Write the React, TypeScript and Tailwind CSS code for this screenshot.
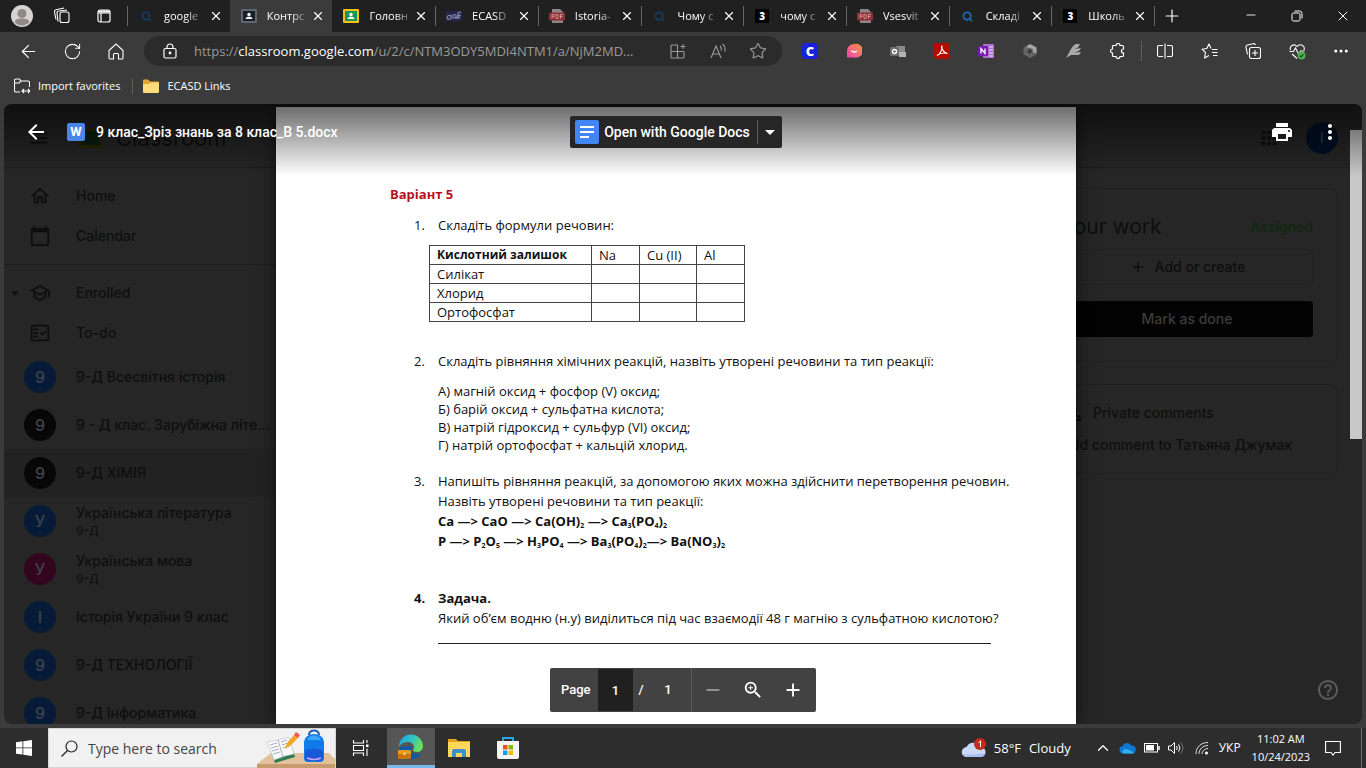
import type { ReactNode } from "react";
import {
  ArrowLeft, RotateCw, Star, Plus, Minus, X, Ellipsis, ChevronUp, Search,
} from "lucide-react";
import {
  MdArrowBack, MdPrint, MdMoreVert, MdHelpOutline, MdOutlineHome, MdCalendarToday, MdOutlineSchool,
  MdOutlineFactCheck, MdArrowDropDown, MdZoomIn, MdAdd, MdRemove, MdMenu, MdPersonOutline, MdApps,
} from "react-icons/md";

const ui = "font-['Open_Sans','Noto_Sans',sans-serif]";
const google = "font-['Inter','Noto_Sans',sans-serif]";
const preview = "font-['Roboto','Noto_Sans',sans-serif]";

function ClassroomIcon({ frame, board }: { frame: string; board: string }) {
  return (
    <svg width="16" height="16" viewBox="0 0 16 16">
      <rect x="0" y="1" width="16" height="14" rx="1" fill={frame} />
      <rect x="2" y="3" width="12" height="10" fill={board} />
      <circle cx="8" cy="6.5" r="1.7" fill="#fff" />
      <path d="M4.5 11c0-1.800 2-2.300 3.500-2.300s3.500.5 3.500 2.300z" fill="#fff" />
    </svg>
  );
}

function PdfIcon() {
  return (
    <svg width="16" height="16" viewBox="0 0 16 16">
      <path d="M3 1h8l3 3v11H3z" fill="#8b8583" />
      <rect x="0" y="4.500" width="16" height="8" rx="1" fill="#8f3237" />
      <path d="M3 10.500v-4h1.500a1 1 0 0 1 0 2.200H3M7 6.500v4h.8a2 2 0 0 0 0-4zM11.500 10.500v-4H14M11.500 8.500h2" stroke="#d9a9aa" strokeWidth=".8" fill="none" />
    </svg>
  );
}

function ZIcon() {
  return <span className="flex h-3.5 w-3.5 items-center justify-center bg-black text-[10px] leading-none font-extrabold text-white">3</span>;
}

function EcasdIcon() {
  return (
    <svg width="16" height="16" viewBox="0 0 16 16">
      <rect y="3" width="16" height="10" fill="#24264a" />
      <path d="M5 8.500c-1-2-4-1-4 1s3 2.500 4 .5V7v4M7 11V7c2-1 3 0 3 1v3M12 11V5c0-1 2-1 3-.5M11 7.500h4M8 9.500h6" stroke="#7e80a0" strokeWidth="1.300" fill="none" />
    </svg>
  );
}

function Magnifier({ color }: { color: string }) {
  return <Search size={11} color={color} strokeWidth={4} />;
}

const tabs: { title: string; icon: ReactNode; active?: boolean }[] = [
  { title: "google", icon: <Magnifier color="#183a5c" /> },
  { title: "Контрс", icon: <ClassroomIcon frame="#5f6670" board="#15202d" />, active: true },
  { title: "Головн", icon: <ClassroomIcon frame="#f2c20c" board="#23915a" /> },
  { title: "ECASD", icon: <EcasdIcon /> },
  { title: "Istoria-", icon: <PdfIcon /> },
  { title: "Чому с", icon: <Magnifier color="#183a5c" /> },
  { title: "чому с", icon: <ZIcon /> },
  { title: "Vsesvit", icon: <PdfIcon /> },
  { title: "Складі", icon: <Magnifier color="#2069b0" /> },
  { title: "Школь", icon: <ZIcon /> },
];

function TabBar() {
  return (
    <div className="flex h-8 shrink-0 items-stretch bg-[#202020] text-white">
      <div className="flex w-[127px] items-center">
        <button aria-label="Profile" className="ml-[11px]">
          <svg width="22" height="22" viewBox="0 0 22 22">
            <circle cx="11" cy="11" r="11" fill="#d6d3d1" />
            <circle cx="11" cy="8.500" r="4.500" fill="#8f8a87" />
            <path d="M3.500 17c1-3 4-3.500 7.500-3.500s6.500.5 7.500 3.500a10 10 0 0 1-15 0z" fill="#8f8a87" />
          </svg>
        </button>
        <button aria-label="Workspaces" className="ml-5">
          <svg width="18" height="18" viewBox="0 0 18 18" fill="none" stroke="#fff" strokeWidth="1.1">
            <rect x="7" y="5" width="9" height="10.500" rx="2" />
            <path d="M5 14.500 4 6a2 2 0 0 1 2-2l8-1M3 12.500 1.500 5a2 2 0 0 1 1.500-2.300L11 1" />
          </svg>
        </button>
        <button aria-label="Tab actions" className="ml-[26px]">
          <svg width="14" height="14" viewBox="0 0 14 14" fill="none" stroke="#fff" strokeWidth="1.2">
            <rect x="1" y="1" width="12" height="12" rx="2" />
            <path d="M1 4h12M4 4v9" />
            <path d="M1.500 2.500h11" strokeWidth="2" />
          </svg>
        </button>
      </div>
      <div className="flex min-w-0 flex-1">
        {tabs.map((t, i) => (
          <div
            key={i}
            className={
              t.active
                ? "flex min-w-0 flex-1 basis-0 items-center gap-[10px] bg-[#3b3b3b] pr-[6px] pl-[11px]"
                : "flex min-w-0 flex-1 basis-0 items-center gap-[10px] pr-[6px] pl-[11px] " +
                  (i === 1 || i === 2 ? "" : "bg-[linear-gradient(#666,#666)] bg-[length:1px_20px] bg-[position:left_center] bg-no-repeat")
            }
          >
            <span className="flex w-4 shrink-0 justify-center">{t.icon}</span>
            <span className="min-w-0 flex-1 text-[11px] leading-4 whitespace-nowrap">
              <span className="inline-block [mask-image:linear-gradient(to_right,#000_65%,#0005)]">{t.title}</span>
            </span>
            <button aria-label="Close tab" className="flex w-4 shrink-0 justify-center">
              <X size={14} strokeWidth={2} />
            </button>
          </div>
        ))}
      </div>
      <div className="flex w-[212px] items-center">
        <span className="h-5 w-px bg-[#666]" />
        <button aria-label="New tab" className="ml-[7px]"><Plus size={20} strokeWidth={1.4} /></button>
        <div className="ml-auto flex">
          <button aria-label="Minimize" className="flex w-[46px] justify-center"><Minus size={14} strokeWidth={1.5} /></button>
          <button aria-label="Restore" className="flex w-[46px] items-center justify-center">
            <svg width="12" height="12" viewBox="0 0 12 12" fill="none" stroke="#fff">
              <rect x="1" y="3" width="8" height="8" rx="1.500" />
              <path d="M3.500 1h5a2.500 2.500 0 0 1 2.500 2.500v5" />
            </svg>
          </button>
          <button aria-label="Close" className="flex w-[46px] justify-center"><X size={16} strokeWidth={1.5} /></button>
        </div>
      </div>
    </div>
  );
}

function ToolButton({ label, children }: { label: string; children: ReactNode }) {
  return (
    <button aria-label={label} className="flex h-8 w-11 shrink-0 items-center justify-center">
      {children}
    </button>
  );
}

function Toolbar() {
  return (
    <div className="flex h-[38px] shrink-0 items-center bg-[#3b3b3b] pr-[3px] pl-[6px] text-white">
      <ToolButton label="Back"><ArrowLeft size={21} strokeWidth={1.3} /></ToolButton>
      <ToolButton label="Refresh"><RotateCw size={19} strokeWidth={1.3} /></ToolButton>
      <ToolButton label="Home">
        <svg width="16" height="17" viewBox="0 0 16 17" fill="none" stroke="#fff" strokeWidth="1.1">
          <path d="M1 7.500 8 1l7 6.500V15a1 1 0 0 1-1 1h-3.500v-4.500a1 1 0 0 0-1-1h-3a1 1 0 0 0-1 1V16H2a1 1 0 0 1-1-1z" />
        </svg>
      </ToolButton>
      <div className="mx-[6px] flex h-[30px] min-w-0 flex-1 items-center rounded-full bg-[#2b2b2b] pr-1 text-[#9a9a9a]">
        <svg className="ml-[19px] shrink-0" width="14" height="16" viewBox="0 0 14 16" fill="none" stroke="#fff" strokeWidth="1.2">
          <rect x="1" y="5.500" width="12" height="9.500" rx="1.500" />
          <path d="M4 5.500V4a3 3 0 0 1 6 0v1.500" />
          <circle cx="7" cy="10" r=".8" fill="#fff" />
        </svg>
        <div className="ml-[17px] min-w-0 flex-1 overflow-hidden text-[13px] leading-5 whitespace-nowrap">
          https://<span className="text-white">classroom.google.com</span>/u/2/c/NTM3ODY5MDI4NTM1/a/NjM2MD...
        </div>
        <button aria-label="Install app" className="flex w-10 shrink-0 justify-center">
          <svg width="16" height="16" viewBox="0 0 16 16" fill="none" stroke="currentColor" strokeWidth="1.1">
            <path d="M7.500 2H2a1 1 0 0 0-1 1v11a1 1 0 0 0 1 1h11a1 1 0 0 0 1-1V8.500M1 8.500h13M7.500 2v13M10.500 3.500h5M13 1v5" />
          </svg>
        </button>
        <button aria-label="Read aloud" className="flex w-10 shrink-0 justify-center">
          <svg width="16" height="16" viewBox="0 0 16 16" fill="none" stroke="currentColor" strokeWidth="1.1">
            <path d="M1 15 6 3l5 12M3 11h6M10 3c1.500 1.500 1.500 3 1 4.500M12.500 1c2.500 2 3 5 2 7.500" />
          </svg>
        </button>
        <button aria-label="Favorite" className="flex w-10 shrink-0 justify-center"><Star size={18} strokeWidth={1.5} /></button>
      </div>
      <ToolButton label="Clever">
        <span className="flex h-4 w-4 items-center justify-center rounded-sm bg-[#1a1fe0] text-[13px] leading-none font-extrabold">C</span>
      </ToolButton>
      <ToolButton label="Screencast">
        <svg width="16" height="16" viewBox="0 0 16 16">
          <defs><linearGradient id="sc" x1="1" y1="0" x2="0" y2="1"><stop offset="0" stopColor="#ff9a3d" /><stop offset="1" stopColor="#f03fb5" /></linearGradient></defs>
          <path d="M8 1a7 7 0 1 1 0 13.500H1V8a7 7 0 0 1 7-7z" fill="url(#sc)" />
          <path d="M5 7c2 1.500 4 1.500 6.500.2a3.300 3.300 0 0 1-6.500-.2z" fill="#fff" />
        </svg>
      </ToolButton>
      <ToolButton label="Password manager">
        <svg width="16" height="16" viewBox="0 0 16 16">
          <path d="M6 3h9v9H8z" fill="#8b8b8b" />
          <rect x="9" y="9" width="7" height="5" fill="#b3b3b3" />
          <rect y="4" width="9" height="9" rx="1" fill="#6c6c6c" />
          <circle cx="4.500" cy="8.500" r="2" fill="none" stroke="#fff" strokeWidth="1.4" />
        </svg>
      </ToolButton>
      <ToolButton label="Acrobat">
        <svg width="16" height="16" viewBox="0 0 16 16">
          <rect width="16" height="16" rx="2" fill="#b30b00" />
          <path d="M3 12.500c3-1.500 5.500-5.500 5-9.500-1.500 0 1 7 5.500 7.500C10 9.500 6 10 3 12.500z" fill="none" stroke="#fff" strokeWidth="1.1" />
        </svg>
      </ToolButton>
      <ToolButton label="OneNote">
        <svg width="16" height="16" viewBox="0 0 16 16">
          <rect x="5" y="1" width="11" height="14" rx="1" fill="#b06fd0" />
          <path d="M11 4h4M11 7h4M11 10h4M11 13h4" stroke="#f0dcf8" />
          <rect y="3" width="10" height="10" rx="1" fill="#7719aa" />
          <path d="M3 10.500v-5l4 5v-5" stroke="#fff" strokeWidth="1.3" fill="none" />
        </svg>
      </ToolButton>
      <ToolButton label="Extension">
        <svg width="16" height="16" viewBox="0 0 16 16">
          <path d="m8 1 6.500 3.500v7L8 15l-6.500-3.500v-7z" fill="#666" />
          <path d="m8 1 6.500 3.500v6L11 9V6L4 4z" fill="#a5a5a5" />
          <path d="M6 6.500 9 6l1 3-2 2-2.500-1.500z" fill="#3b3b3b" />
        </svg>
      </ToolButton>
      <ToolButton label="Editor">
        <svg width="16" height="16" viewBox="0 0 16 16" fill="#aaa">
          <path d="M0 15 5 6q2-4 5-5h4l-2 3.500L8.500 6 15 5l-2 3-5 1.500 7-.5-2 3H5z" />
        </svg>
      </ToolButton>
      <ToolButton label="Extensions">
        <svg width="16" height="16" viewBox="0 0 16 16" fill="none" stroke="#fff" strokeWidth="1.2">
          <path d="M3.500 2.500H6a2 2 0 0 1 4 0h2.500a1 1 0 0 1 1 1V6a2 2 0 0 0 0 4v2.500a1 1 0 0 1-1 1H10a2 2 0 0 1-4 0H3.500a1 1 0 0 1-1-1V10a2 2 0 0 1 0-4V3.500a1 1 0 0 1 1-1z" />
        </svg>
      </ToolButton>
      <span className="mx-px h-5 w-px shrink-0 bg-[#5e5e5e]" />
      <ToolButton label="Split screen">
        <svg width="16" height="16" viewBox="0 0 16 16" fill="none" stroke="#fff" strokeWidth="1.1">
          <path d="M6 2.500H2a1.500 1.500 0 0 0-1.500 1.500v8A1.500 1.500 0 0 0 2 13.500h4M10 2.500h4a1.500 1.500 0 0 1 1.500 1.500v8a1.500 1.500 0 0 1-1.500 1.500h-4M8 .5v15" />
        </svg>
      </ToolButton>
      <ToolButton label="Favorites">
        <svg width="17" height="16" viewBox="0 0 17 16" fill="none" stroke="#fff" strokeWidth="1.1" strokeLinejoin="round">
          <path d="M10 5.500 8 1 5.800 5.500 1 6.200l3.500 3.300L3.600 15 8 12.500M11 6.500h5.500M11 9.500h5.500M12 12.500h4.500" />
        </svg>
      </ToolButton>
      <ToolButton label="Collections">
        <svg width="16" height="16" viewBox="0 0 16 16" fill="none" stroke="#fff" strokeWidth="1.1">
          <rect x="4.500" y="4.500" width="11" height="11" rx="2" />
          <path d="M10 7v6M7 10h6M2.500 11.500 1 4.500A2 2 0 0 1 2.500 2L8 .8A2 2 0 0 1 10.500 2" />
        </svg>
      </ToolButton>
      <ToolButton label="Browser essentials">
        <svg width="17" height="17" viewBox="0 0 17 17" fill="none" stroke="#fff" strokeWidth="1.1">
          <path d="M1.500 7C0 3 5 0 8 3.500 11 0 16.500 2.500 15 7M.5 8.500h4L6.500 5l3 6 2-3h4M3 11l5 4.500" />
          <circle cx="12.500" cy="12.500" r="4" fill="#4caf50" stroke="none" />
          <path d="m10.800 12.700 1.200 1.200 2.300-2.600" stroke="#1c3a1d" />
        </svg>
      </ToolButton>
      <ToolButton label="Menu"><Ellipsis size={18} /></ToolButton>
    </div>
  );
}

function FavoritesBar() {
  return (
    <div className="flex h-[34px] shrink-0 items-center bg-[#3b3b3b] pb-0.5 pl-[14px] text-[11px] leading-4 text-white">
      <button className="flex items-center gap-2">
        <svg width="16" height="16" viewBox="0 0 16 16" fill="none" stroke="#fff" strokeWidth="1.1">
          <path d="M6 14H2a1.500 1.500 0 0 1-1.500-1.500v-10A1.500 1.500 0 0 1 2 1h3.500L7 3h7a1.500 1.500 0 0 1 1.500 1.500V9M.5 5H5l2-2M8 13h8M10 11l-2 2 2 2M14 11l2 2-2 2" />
        </svg>
        Import favorites
      </button>
      <span className="mr-[10px] ml-3 h-4 w-px bg-[#5e5e5e]" />
      <button className="flex items-center gap-2">
        <svg width="16" height="14" viewBox="0 0 16 14">
          <path d="M0 1.500A1 1 0 0 1 1 .5h4l2 2h8a1 1 0 0 1 1 1V13H0z" fill="#e0a92e" />
          <path d="M0 5h6l1.500-1.500H16V13a1 1 0 0 1-1 1H1a1 1 0 0 1-1-1z" fill="#ffdc7c" />
        </svg>
        ECASD Links
      </button>
    </div>
  );
}

const courses = [
  { letter: "9", name: "9-Д Всесвітня історія", color: "bg-[#061b38]" },
  { letter: "9", name: "9 - Д клас. Зарубіжна літе...", color: "bg-[#070707]" },
  { letter: "9", name: "9-Д ХІМІЯ", color: "bg-[#070707]", selected: true },
  { letter: "У", name: "Українська література", section: "9-Д", color: "bg-[#061b38]" },
  { letter: "У", name: "Українська мова", section: "9-Д", color: "bg-[#34051f]" },
  { letter: "І", name: "Історія України 9 клас", color: "bg-[#061b38]" },
  { letter: "9", name: "9-Д ТЕХНОЛОГІЇ", color: "bg-[#061b38]" },
  { letter: "9", name: "9-Д Інформатика", color: "bg-[#061b38]" },
];

function NavRow({ icon, label, caret }: { icon: ReactNode; label: string; caret?: boolean }) {
  return (
    <a href="#" className="flex h-10 items-center">
      <span className="flex w-5 justify-end text-[18px]">{caret && <MdArrowDropDown className="shrink-0" />}</span>
      <span className="flex w-8 justify-center text-[22px]">{icon}</span>
      <span className="ml-5">{label}</span>
    </a>
  );
}

// The classroom page that sits dimmed behind the document preview
function Classroom() {
  return (
    <div className={`absolute inset-0 flex flex-col overflow-hidden bg-[#262626] text-[14px] leading-5 font-medium text-[#0e0e0e] ${google}`}>
      <header className="flex h-16 shrink-0 items-center border-b border-[#1f1f1f] pt-1 text-[22px] font-normal">
        <MdMenu className="ml-6 shrink-0" />
        <span className="ml-7 flex h-5 w-6 shrink-0 items-center justify-center bg-[#2b2500]">
          <span className="h-3.5 w-[18px] bg-[#08200f]" />
        </span>
        <span className="ml-[14px] shrink-0">Classroom</span>
        <MdApps className="ml-auto shrink-0" />
        <span className="mr-6 ml-[26px] flex h-8 w-8 shrink-0 items-center justify-center rounded-full bg-[#001026] text-[14px] text-[#3a4452]">І</span>
      </header>
      <div className="flex min-h-0 flex-1">
        <nav className="w-[272px] shrink-0 pt-2">
          <NavRow icon={<MdOutlineHome />} label="Home" />
          <NavRow icon={<MdCalendarToday />} label="Calendar" />
          <div className="my-2 border-t border-[#1f1f1f]" />
          <NavRow icon={<MdOutlineSchool />} label="Enrolled" caret />
          <NavRow icon={<MdOutlineFactCheck />} label="To-do" />
          {courses.map((c) => (
            <a key={c.name} href="#" className={c.selected ? "flex h-12 items-center bg-[#222] pl-5" : "flex h-12 items-center pl-5"}>
              <span className={`flex h-8 w-8 shrink-0 items-center justify-center rounded-full text-[16px] text-[#3f434a] ${c.color}`}>{c.letter}</span>
              <span className="ml-5 flex min-w-0 flex-col whitespace-nowrap">
                <span>{c.name}</span>
                {c.section && <span className="text-[12px] leading-4 font-normal">{c.section}</span>}
              </span>
            </a>
          ))}
        </nav>
        <aside className="mr-6 ml-auto w-[302px] shrink-0 pt-5">
          <section className="rounded-lg border border-[#202020] p-6">
            <div className="flex h-7 items-center justify-between">
              <h2 className="text-[21px] font-normal">Your work</h2>
              <span className="text-[#10260f]">Assigned</span>
            </div>
            <button className="mt-2 flex h-9 w-full items-center justify-center gap-2 rounded border border-[#212121]">
              <MdAdd className="text-[18px]" />
              Add or create
            </button>
            <button className="mt-4 h-9 w-full rounded bg-[#030303] text-[#3c3c3c]">Mark as done</button>
          </section>
          <section className="mt-[22px] rounded-lg border border-[#202020] px-6 pt-4 pb-4">
            <div className="flex h-6 items-center gap-2">
              <MdPersonOutline className="text-[24px]" />
              Private comments
            </div>
            <p className="mt-2 h-6 leading-6 whitespace-nowrap">Add comment to Татьяна Джумак</p>
          </section>
        </aside>
      </div>
    </div>
  );
}

function Sub({ children }: { children: ReactNode }) {
  return <sub className="bottom-[-2px] text-[7px]">{children}</sub>;
}

const residues = ["Силікат", "Хлорид", "Ортофосфат"];

function DocumentPage() {
  return (
    <article className="mx-auto mt-[3px] w-[800px] shrink-0 bg-white pt-[77px] pl-[114px] text-[13px] leading-5 text-[#111] shadow-[0_0_16px_#000a] font-['Open_Sans','Noto_Sans',sans-serif]">
      <h1 className="font-bold text-[#b5121b]">Варіант 5</h1>
      <div className="mt-[11px] flex whitespace-nowrap">
        <span className="ml-6 w-6 shrink-0">1.</span>
        <p>Складіть формули речовин:</p>
      </div>
      <table className="mt-[10px] ml-[39px] table-fixed border-collapse text-left leading-[18px]">
        <thead>
          <tr>
            <th className="w-[162px] border border-[#444] px-[7px] py-0 text-[12px] whitespace-nowrap">Кислотний залишок</th>
            <th className="w-12 border border-[#444] px-[7px] py-0 font-normal">Na</th>
            <th className="w-[57px] border border-[#444] px-[7px] py-0 font-normal whitespace-nowrap">Cu (II)</th>
            <th className="w-12 border border-[#444] px-[7px] py-0 font-normal">Al</th>
          </tr>
        </thead>
        <tbody>
          {residues.map((r) => (
            <tr key={r}>
              <td className="border border-[#444] px-[7px] py-0">{r}</td>
              <td className="border border-[#444]" />
              <td className="border border-[#444]" />
              <td className="border border-[#444]" />
            </tr>
          ))}
        </tbody>
      </table>
      <div className="mt-[29px] flex whitespace-nowrap">
        <span className="ml-6 w-6 shrink-0">2.</span>
        <p>Складіть рівняння хімічних реакцій, назвіть утворені речовини та тип реакції:</p>
      </div>
      <div className="mt-[11px] ml-12 leading-[18px] whitespace-nowrap">
        <p>А) магній оксид + фосфор (V) оксид;</p>
        <p>Б) барій оксид + сульфатна кислота;</p>
        <p>В) натрій гідроксид + сульфур (VI) оксид;</p>
        <p>Г) натрій ортофосфат + кальцій хлорид.</p>
      </div>
      <div className="mt-[17px] flex whitespace-nowrap">
        <span className="ml-6 w-6 shrink-0">3.</span>
        <div>
          <p>Напишіть рівняння реакцій, за допомогою яких можна здійснити перетворення речовин.</p>
          <p>Назвіть утворені речовини та тип реакції:</p>
          <p className="font-bold">
            Ca —&gt; CaO —&gt; Ca(OH)<Sub>2</Sub> —&gt; Ca<Sub>3</Sub>(PO<Sub>4</Sub>)<Sub>2</Sub>
          </p>
          <p className="font-bold">
            P —&gt; P<Sub>2</Sub>O<Sub>5</Sub> —&gt; H<Sub>3</Sub>PO<Sub>4</Sub> —&gt; Ba<Sub>3</Sub>(PO<Sub>4</Sub>)<Sub>2</Sub>—&gt; Ba(NO<Sub>3</Sub>)<Sub>2</Sub>
          </p>
        </div>
      </div>
      <div className="mt-[37px] flex whitespace-nowrap">
        <span className="ml-6 w-6 shrink-0 font-bold">4.</span>
        <div>
          <p className="font-bold">Задача.</p>
          <p>Який об’єм водню (н.у) виділиться під час взаємодії 48 г магнію з сульфатною кислотою?</p>
          <div className="mt-[15px] w-[553px] border-t border-[#222]" />
        </div>
      </div>
    </article>
  );
}

function PreviewHeader() {
  return (
    <div className={`absolute inset-x-0 top-0 grid h-[72px] grid-cols-[1fr_auto_1fr] items-start bg-gradient-to-b from-black/60 to-transparent pt-3 pr-[14px] text-[14px] leading-5 font-medium text-white ${preview}`}>
      <div className="flex h-8 items-center">
        <button aria-label="Close preview" className="ml-5 text-[24px]"><MdArrowBack /></button>
        <span className="ml-[19px] flex h-[18px] w-[18px] shrink-0 items-center justify-center rounded-xs bg-[#4a86e8] text-[13px] font-bold">W</span>
        <span className="ml-[11px] whitespace-nowrap">9 клас_Зріз знань за 8 клас_В 5.docx</span>
      </div>
      <div className="flex h-8 items-center rounded-xs bg-[#262626]">
        <button className="flex items-center gap-[5px] pr-[7px] pl-[5px] whitespace-nowrap">
          <svg width="24" height="24" viewBox="0 0 24 24">
            <rect width="24" height="24" rx="2" fill="#4285f4" />
            <path d="M5 7h14M5 12h14M5 17h9" stroke="#fff" strokeWidth="2.200" />
          </svg>
          Open with Google Docs
        </button>
        <span className="h-6 w-px bg-[#5c5c5c]" />
        <button aria-label="Choose app" className="flex w-6 justify-center text-[24px]"><MdArrowDropDown className="shrink-0" /></button>
      </div>
      <div className="flex h-8 items-center justify-end text-[24px]">
        <button aria-label="Print" className="mr-6"><MdPrint /></button>
        <button aria-label="More actions" className="mr-[6px]"><MdMoreVert /></button>
      </div>
    </div>
  );
}

function PageControls() {
  return (
    <div className={`absolute inset-x-0 bottom-3 flex justify-center text-[13px] font-medium text-white ${preview}`}>
      <div className="flex h-11 items-center rounded-xs bg-[#424242] pr-[3px] pl-[11px]">
        <label htmlFor="page" className="w-[37px]">Page</label>
        <input id="page" defaultValue="1" className="h-[42px] w-[35px] bg-[#202020] text-center" />
        <span className="w-4 text-center">/</span>
        <span className="w-[42px] pr-1 text-center">1</span>
        <span className="mr-px h-full w-px bg-[#5c5c5c]" />
        <button aria-label="Zoom out" className="flex w-10 justify-center text-[22px] text-[#999]"><MdRemove /></button>
        <button aria-label="Reset zoom" className="flex w-10 justify-center text-[22px]"><MdZoomIn /></button>
        <button aria-label="Zoom in" className="flex w-10 justify-center text-[22px]"><MdAdd /></button>
      </div>
    </div>
  );
}

function SearchArt() {
  return (
    <svg className="h-10 w-20 shrink-0" viewBox="0 0 80 40">
      <path d="m2 36 14-11h58l6 6v9H2z" fill="#e2c19c" />
      <path d="M2 36h78v4H2z" fill="#c69b6d" />
      <path d="m13 15 21-5 6 19-20 6z" fill="#2f7d51" />
      <path d="m12 14 11-2 11-3 5 17-9 2-11 4z" fill="#fafafa" stroke="#b9bfd0" strokeWidth=".6" />
      <path d="m15 17 7-2M16 20l7-2M17 23l7-2M18 26l7-2M26 14l6-2M27 17l6-2M28 20l6-2M23 12l5 17" stroke="#9298b5" strokeWidth=".8" />
      <path d="m30 21 2-6 7-8 4 3-8 8z" fill="#f5a623" />
      <path d="m39 7 2-3 4 3-2 3z" fill="#ef5350" />
      <path d="M54 7c0-6 10-6 10 0" fill="none" stroke="#1c5fae" strokeWidth="2" />
      <path d="M49 15c0-12 20-12 20 0v15q0 4-4 4H53q-4 0-4-4z" fill="#0f7bea" />
      <path d="M52 12c2-6 12-6 14 0z" fill="#3ba7fb" />
      <path d="M50 23c3-3 15-3 18 0v7q0 3-3 3H53q-3 0-3-3z" fill="#1759d8" />
      <path d="M52 30q7 3 14 0" stroke="#c9a3f5" strokeWidth="1.500" fill="none" />
    </svg>
  );
}

function Taskbar() {
  return (
    <div className="flex h-10 shrink-0 items-stretch bg-[#2d2d2d] text-white">
      <button aria-label="Start" className="flex w-12 items-center justify-center">
        <svg width="16" height="16" viewBox="0 0 16 16" fill="#fff">
          <path d="M0 2.200 6.500 1.300v6.200H0zM7.300 1.200 16 0v7.500H7.300zM0 8.300h6.500v6.300L0 13.700zM7.300 8.300H16V16l-8.700-1.200z" />
        </svg>
      </button>
      <label className="flex w-72 items-center border border-[#d5d5d5] bg-[#f1f1f1]">
        <svg className="ml-3 shrink-0" width="17" height="17" viewBox="0 0 17 17" fill="none" stroke="#222" strokeWidth="1.2">
          <circle cx="10.500" cy="6.500" r="5.500" />
          <path d="M6.500 10.500.5 16.500" />
        </svg>
        <input placeholder="Type here to search" className="ml-[10px] min-w-0 flex-1 text-[14px] text-[#333] outline-none placeholder:text-[#444]" />
        <SearchArt />
      </label>
      <button aria-label="Task view" className="mr-[3px] flex w-12 items-center justify-center">
        <svg width="17" height="16" viewBox="0 0 17 16" fill="none" stroke="#fff" strokeWidth="1.1">
          <path d="M1.500 0v3h10V0M1.500 16v-3h10v3M1.500 5.500h10v5h-10zM15 0v3M15 8.500V16" />
          <rect x="14" y="4.500" width="2.500" height="2.500" fill="#fff" stroke="none" />
        </svg>
      </button>
      <button aria-label="Edge" className="flex w-12 items-center justify-center border-b-[3px] border-[#76b9ed] bg-[#565656]">
        <svg width="26" height="26" viewBox="0 0 26 26">
          <defs><linearGradient id="edge" x1="0" y1="0" x2="1" y2=".4"><stop offset="0" stopColor="#1f9fe0" /><stop offset=".55" stopColor="#2cc3c9" /><stop offset="1" stopColor="#6be05a" /></linearGradient></defs>
          <path d="M1 13a12 12 0 0 0 19 10c2-1 3-3 3-4-4 2-10 1-10-4 0-2 1-3 1-3z" fill="#1158a6" />
          <path d="M1 13a12 12 0 0 1 24-1c0 4-3 6-6 6s-4-1-4-2c0-1 1-1 1-3 0-3-3-5-6-5-5 0-8 3-9 5z" fill="url(#edge)" />
          <rect y="16" width="13" height="9" rx="1" fill="#c8760a" />
          <path d="M0 17a1 1 0 0 1 1-1h11a1 1 0 0 1 1 1v3H0z" fill="#e69a1e" />
          <rect x="5.500" y="18.500" width="2" height="2.500" fill="#ffe08a" />
        </svg>
      </button>
      <button aria-label="File Explorer" className="flex w-12 items-center justify-center">
        <svg width="22" height="20" viewBox="0 0 22 20">
          <path d="M0 1h8l2 2h12v16H0z" fill="#e3a21a" />
          <path d="M0 4h22v15H0z" fill="#ffd75e" />
          <path d="M4 19v-6a2 2 0 0 1 2-2h10a2 2 0 0 1 2 2v6h-4v-4H8v4z" fill="#3f8fce" />
        </svg>
      </button>
      <button aria-label="Microsoft Store" className="flex w-[50px] items-center justify-center">
        <svg width="24" height="24" viewBox="0 0 24 24">
          <path d="M7 6V2h10v4" fill="none" stroke="#2aa6e8" strokeWidth="2" />
          <path d="M1 5h22v16a2 2 0 0 1-2 2H3a2 2 0 0 1-2-2z" fill="#f4f4f4" />
          <path d="M7 9h4.500v4.500H7z" fill="#f25022" />
          <path d="M12.500 9H17v4.500h-4.500z" fill="#7fba00" />
          <path d="M7 14.500h4.500V19H7z" fill="#00a4ef" />
          <path d="M12.500 14.500H17V19h-4.500z" fill="#ffb900" />
        </svg>
      </button>
      <div className="ml-auto flex items-center">
        <button className="flex items-center text-[13px] leading-5">
          <svg width="26" height="22" viewBox="0 0 26 22">
            <path d="M6 20a5 5 0 0 1-.5-10A7.500 7.500 0 0 1 19 10a5 5 0 0 1 1 10z" fill="#c9d8f7" />
            <path d="M6 20a5 5 0 0 1-4.500-3c6 1 15 1 23-1a5 5 0 0 1-4.500 4z" fill="#a9bdf0" />
            <circle cx="19" cy="7" r="6" fill="#c42b1c" />
            <path d="m17.500 5.500 2-1.500v6" stroke="#fff" fill="none" />
          </svg>
          <span className="ml-[7px]">58°F</span>
          <span className="ml-2">Cloudy</span>
        </button>
        <button aria-label="Hidden icons" className="ml-[23px]"><ChevronUp size={18} strokeWidth={1.6} /></button>
        <svg className="ml-[7px]" width="17" height="12" viewBox="0 0 17 12">
          <path d="M4 11.500a3.800 3.800 0 0 1-.5-7.500 5 5 0 0 1 9-.5 4 4 0 0 1 .5 8z" fill="#0f78d0" />
          <path d="M4 11.500C2 10 5 6.500 8 7l7 3.500a3 3 0 0 1-2 1z" fill="#35aef5" />
        </svg>
        <svg className="ml-2" width="16" height="10" viewBox="0 0 16 10" fill="none" stroke="#fff">
          <rect x=".5" y=".5" width="13" height="8.500" />
          <path d="M15 3v4" strokeWidth="1.500" />
          <rect x="2" y="2" width="8" height="5.500" fill="#fff" stroke="none" />
        </svg>
        <svg className="ml-2" width="17" height="14" viewBox="0 0 17 14" fill="none" stroke="#fff">
          <path d="M.5 5h2.500l3.500-3.500v11L3 9H.5z" />
          <path d="M8.500 5q1.500 2 0 4M10.500 3.500q3 3.500 0 7" />
          <path d="M12.500 1.500q5 5.500 0 11" stroke="#777" />
        </svg>
        <svg className="ml-[10px]" width="14" height="14" viewBox="0 0 14 14" fill="none" stroke="#ddd">
          <path d="M1 13C1 6 6 1.500 13 1.500M4 13c0-5 4-8.500 9-8.500M7 13c0-3 3-5.500 6-5.500" />
          <circle cx="11.500" cy="12" r="1.500" fill="#fff" stroke="none" />
        </svg>
        <span className="ml-[10px] text-[12px]">УКР</span>
        <div className="ml-[11px] text-center text-[11px] leading-[18px]">
          <div>11:02 AM</div>
          <div>10/24/2023</div>
        </div>
        <button aria-label="Notifications" className="ml-[15px]">
          <svg width="16" height="16" viewBox="0 0 16 16" fill="none" stroke="#fff" strokeWidth="1.1">
            <path d="M.6 1.500h14.800v11H10L8 15l-2-2.500H.6z" />
          </svg>
        </button>
        <span className="mr-1 ml-5 h-10 w-px bg-[#707070]" />
      </div>
    </div>
  );
}

export default function App() {
  return (
    <div className={`flex h-screen flex-col overflow-hidden bg-[#3b3b3b] ${ui}`}>
      <TabBar />
      <Toolbar />
      <FavoritesBar />
      <main className={`relative mx-1 mb-1 flex min-h-0 flex-1 flex-col overflow-hidden rounded-lg pr-[14px] ${google}`}>
        <Classroom />
        <div className="relative flex min-h-0 flex-1">
          <DocumentPage />
        </div>
        <div className="absolute top-[26px] right-0 h-[309px] w-3 bg-[#c8c8c8]" />
        <PreviewHeader />
        <PageControls />
        <button aria-label="Help" className="absolute right-[22px] bottom-[22px] text-[24px] text-[#5a5a5a]"><MdHelpOutline /></button>
      </main>
      <Taskbar />
    </div>
  );
}
